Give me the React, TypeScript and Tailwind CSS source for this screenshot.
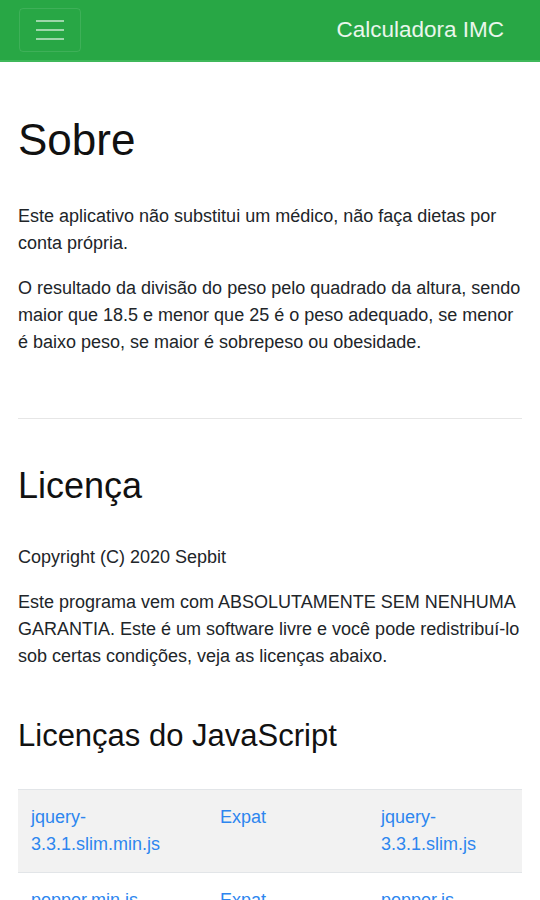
import React from 'react';

const libs = [
  { file: 'jquery-3.3.1.slim.min.js', license: 'Expat', source: 'jquery-3.3.1.slim.js' },
  { file: 'popper.min.js', license: 'Expat', source: 'popper.js' },
];

export default function App() {
  return (
    <div className="min-h-screen bg-white text-[#212529] font-['Liberation_Sans',Arial,sans-serif]">
      {/* Navbar */}
      <header className="flex h-[62px] items-center justify-between border-b-2 border-[#3fb85a] bg-[#28a745] pl-[19px] pr-[36px]">
        <button
          className="flex h-[44px] w-[62px] items-center justify-center rounded-[4px] border border-white/10"
          aria-label="Menu"
        >
          <span className="flex w-[28px] flex-col gap-[7px]">
            <span className="h-[2px] w-full bg-white/55" />
            <span className="h-[2px] w-full bg-white/55" />
            <span className="h-[2px] w-full bg-white/55" />
          </span>
        </button>
        <span className="text-[22.5px] leading-none text-white/90">Calculadora IMC</span>
      </header>

      <main className="px-[18px] text-[18px] leading-[27px]">
        {/* Sobre */}
        <h1 className="mt-[52px] text-[44px] leading-[52px] text-[#111]">Sobre</h1>
        <p className="mt-[37px]">
          Este aplicativo não substitui um médico, não faça dietas por conta própria.
        </p>
        <p className="mt-[18px]">
          O resultado da divisão do peso pelo quadrado da altura, sendo maior que 18.5 e menor
          que 25 é o peso adequado, se menor é baixo peso, se maior é sobrepeso ou obesidade.
        </p>

        <hr className="mt-[62px] border-t border-[#e6e6e6]" />

        {/* Licença */}
        <h2 className="mt-[46px] text-[36px] leading-[42px] text-[#111]">Licença</h2>
        <p className="mt-[37px]">Copyright (C) 2020 Sepbit</p>
        <p className="mt-[18px]">
          Este programa vem com ABSOLUTAMENTE SEM NENHUMA GARANTIA. Este é um software livre e
          você pode redistribuí-lo sob certas condições, veja as licenças abaixo.
        </p>

        <h3 className="mt-[48px] text-[31px] leading-[36px] text-[#111]">Licenças do JavaScript</h3>

        <table className="mt-[35px] w-full border-collapse">
          <tbody>
            {libs.map((lib, i) => (
              <tr key={lib.file} className={i % 2 === 0 ? 'bg-[#f2f2f2]' : ''}>
                <td className="w-[189px] border-t border-[#e2e5e8] px-[13px] py-[14px] align-top">
                  <a className="text-[#2d86ef]">{lib.file.replace('-', '-\u200b')}</a>
                </td>
                <td className="w-[161px] border-t border-[#e2e5e8] px-[13px] py-[14px] align-top">
                  <a className="text-[#2d86ef]">{lib.license}</a>
                </td>
                <td className="border-t border-[#e2e5e8] px-[13px] py-[14px] align-top">
                  <a className="text-[#2d86ef]">{lib.source}</a>
                </td>
              </tr>
            ))}
          </tbody>
        </table>
      </main>
    </div>
  );
}
